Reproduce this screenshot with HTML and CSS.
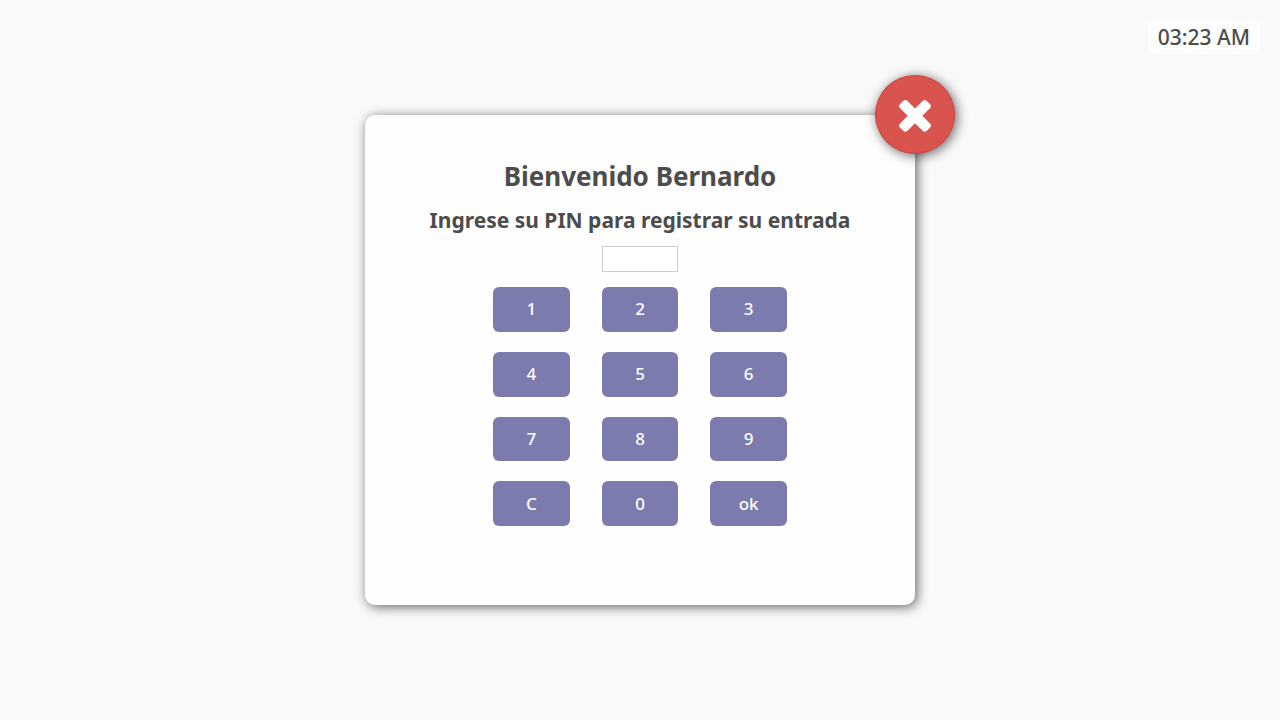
FILE: index.html
```html
<!DOCTYPE html>
<html lang="es">
<head>
<meta charset="utf-8">
<meta name="viewport" content="width=device-width, initial-scale=1">
<title>Registro de entrada</title>
<link rel="stylesheet" href="styles.css">
</head>
<body>
<time class="clock">03:23 AM</time>
<main class="dialog">
  <button class="close" type="button" aria-label="Cerrar">
    <svg class="close-icon" viewBox="0 32 1792 1792" aria-hidden="true"><path d="M1490 1322q0 40-28 68l-136 136q-28 28-68 28t-68-28l-294-294-294 294q-28 28-68 28t-68-28l-136-136q-28-28-28-68t28-68l294-294-294-294q-28-28-28-68t28-68l136-136q28-28 68-28t68 28l294 294 294-294q28-28 68-28t68 28l136 136q28 28 28 68t-28 68l-294 294 294 294q28 28 28 68z"/></svg>
  </button>
  <h1 class="title">Bienvenido Bernardo</h1>
  <label class="prompt" for="pin">Ingrese su PIN para registrar su entrada</label>
  <form class="keypad">
    <input class="pin" id="pin" type="password" inputmode="numeric">
    <button class="key" type="button">1</button>
    <button class="key" type="button">2</button>
    <button class="key" type="button">3</button>
    <button class="key" type="button">4</button>
    <button class="key" type="button">5</button>
    <button class="key" type="button">6</button>
    <button class="key" type="button">7</button>
    <button class="key" type="button">8</button>
    <button class="key" type="button">9</button>
    <button class="key" type="button">C</button>
    <button class="key" type="button">0</button>
    <button class="key" type="submit">ok</button>
  </form>
</main>
</body>
</html>
```

FILE: styles.css
```css
* { box-sizing: border-box; }
body {
  margin: 0;
  min-height: 100vh;
  display: flex;
  align-items: center;
  justify-content: center;
  background: #f9f9f9;
  color: #4c4c4c;
  font-family: "Lucida Grande", "Noto Sans", "Open Sans", sans-serif;
}
.clock {
  position: absolute;
  top: 20px;
  right: 20px;
  padding: 0 10px;
  border-radius: 3px;
  background: #fdfdfd;
  font-size: 21px;
  font-weight: 500;
  line-height: 34px;
}
.dialog {
  position: relative;
  display: flex;
  flex-direction: column;
  align-items: center;
  width: 550px;
  max-width: 90%;
  padding: 43px 20px 79px;
  background: #fefefe;
  border-radius: 10px;
  box-shadow: 2px 2px 12px rgba(0, 0, 0, .6);
}
.close {
  position: absolute;
  top: -40px;
  right: -40px;
  display: grid;
  place-items: center;
  width: 80px;
  height: 79px;
  padding: 0;
  border: 1px solid #d43f3a;
  border-radius: 50%;
  background: #d9534f;
  box-shadow: 2px 2px 12px rgba(0, 0, 0, .6);
}
.close-icon {
  width: 48px;
  height: 48px;
  fill: #fff;
}
.title {
  margin: 0 0 11px;
  font-size: 26px;
  line-height: 36px;
}
.prompt {
  margin-bottom: 10px;
  font-size: 21px;
  font-weight: 700;
  line-height: 31px;
}
.keypad {
  display: grid;
  grid-template-columns: repeat(3, 1fr);
  grid-template-rows: 21px repeat(4, 1fr);
  gap: 20px 32px;
  width: 294px;
  min-height: 280px;
}
.pin {
  grid-column: 2;
  width: 100%;
  height: 26px;
  padding: 2px 4px;
  border: 1px solid #ccc;
  background: #fff;
  font: inherit;
  font-size: 16px;
}
.key:nth-of-type(3n + 1) { grid-column: 1; }
.key {
  padding: 0 0 1px;
  border: 0;
  border-radius: 6px;
  background: #7c7bad;
  color: #fff;
  font-family: inherit;
  font-size: 17px;
  font-weight: 500;
}
```
